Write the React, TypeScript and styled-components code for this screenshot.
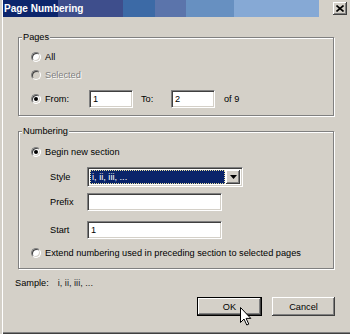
import styled, { createGlobalStyle } from 'styled-components';

const GlobalStyle = createGlobalStyle`
  html, body {
    margin: 0;
    padding: 0;
    background: #d4d0c8;
  }
  body {
    font-family: 'Liberation Sans', Arial, sans-serif;
    font-size: 9.2px;
    color: #000;
  }
`;

export default function App() {
  return (
    <>
      <GlobalStyle />
      <Window>
        <TitleBar>
          <Caption>Page Numbering</Caption>
          <CloseButton>
            <svg width='8' height='7' viewBox='0 0 8 7'>
              <path d='M0.5 0.5 L7.5 6.5 M7.5 0.5 L0.5 6.5' stroke='#000' strokeWidth='1.6' />
            </svg>
          </CloseButton>
        </TitleBar>

        <Body>
          <GroupBox $height={79}>
            <Legend>Pages</Legend>
            <RadioRow $mt={13}>
              <Radio />
              <span>All</span>
            </RadioRow>
            <RadioRow $mt={6} $disabled>
              <Radio $disabled />
              <span>Selected</span>
            </RadioRow>
            <RadioRow $mt={9} $height={18}>
              <Radio $checked />
              <FromLabel>From:</FromLabel>
              <Field $width={44}>1</Field>
              <ToLabel>To:</ToLabel>
              <Field $width={44}>2</Field>
              <OfLabel>of 9</OfLabel>
            </RadioRow>
          </GroupBox>

          <GroupBox $height={138} $mt={15}>
            <Legend>Numbering</Legend>
            <RadioRow $mt={14}>
              <Radio $checked />
              <span>Begin new section</span>
            </RadioRow>
            <FieldRow $mt={9}>
              <FieldLabel>Style</FieldLabel>
              <Select>
                <SelectValue>
                  <span>i, ii, iii, ...</span>
                </SelectValue>
                <DropButton>
                  <svg width='7' height='4' viewBox='0 0 7 4'>
                    <path d='M0 0 H7 L3.5 4 Z' fill='#000' />
                  </svg>
                </DropButton>
              </Select>
            </FieldRow>
            <FieldRow $mt={6}>
              <FieldLabel>Prefix</FieldLabel>
              <Field $width={135} />
            </FieldRow>
            <FieldRow $mt={10}>
              <FieldLabel>Start</FieldLabel>
              <Field $width={135}>1</Field>
            </FieldRow>
            <RadioRow $mt={8}>
              <Radio />
              <span>Extend numbering used in preceding section to selected pages</span>
            </RadioRow>
          </GroupBox>

          <SampleRow>
            <span>Sample:</span>
            <SampleValue>i, ii, iii, ...</SampleValue>
          </SampleRow>

          <ButtonRow>
            <Button $default>OK</Button>
            <Button>Cancel</Button>
          </ButtonRow>
        </Body>

        <Cursor width='12' height='19' viewBox='0 0 12 19'>
          <path d='M0.5 0.5 V15.5 L4 12 L6.8 18 L8.8 17.1 L6.1 11.4 H10.8 Z' fill='#fff' stroke='#000' strokeWidth='1' />
        </Cursor>
      </Window>
    </>
  );
}

const Window = styled.div`
  position: relative;
  width: 350px;
  height: 334px;
  box-sizing: border-box;
  background: #d4d0c8;
  box-shadow:
    inset 2px 0 0 #d4d0c8,
    inset 3px 0 0 #fff,
    inset 0 -1px 0 #404040,
    inset 0 -2px 0 #808080;
  display: flex;
  flex-direction: column;
  overflow: hidden;
`;

const TitleBar = styled.div`
  height: 17px;
  padding-left: 3px;
  display: flex;
  align-items: flex-start;
`;

const Caption = styled.div`
  width: 316px;
  height: 17px;
  box-sizing: border-box;
  padding-left: 1px;

  background: linear-gradient(
    to right,
    #0c256c 0 55px,
    #3e4e8c 55px 120px,
    #3c6aa6 120px 152px,
    #5b74ab 152px 183px,
    #6790c1 183px 231px,
    #86a9d5 231px 316px
  );
  color: #fff;
  font-size: 10px;
  font-weight: bold;
  line-height: 17px;
  white-space: nowrap;
`;

const CloseButton = styled.div`
  width: 14px;
  height: 13px;
  margin: 2px 3px 0 auto;
  box-sizing: border-box;

  background: #d4d0c8;
  box-shadow:
    inset -1px -1px 0 #404040,
    inset 1px 1px 0 #fff,
    inset -2px -2px 0 #808080;
  display: flex;
  justify-content: center;
  align-items: center;
`;

const Body = styled.div`
  padding: 20px 16px 0 18px;
  display: flex;
  flex-direction: column;
`;

const GroupBox = styled.div<{ $height: number; $mt?: number }>`
  height: ${(p) => p.$height}px;
  margin-top: ${(p) => p.$mt ?? 0}px;
  box-sizing: border-box;
  padding-left: 12px;

  border: 1px solid #808080;
  box-shadow:
    1px 1px 0 #fff,
    inset 1px 1px 0 #fff;
  display: flex;
  flex-direction: column;

  position: relative;
`;

const Legend = styled.span`
  position: absolute;
  top: -6px;
  left: 3px;
  padding: 0 1px;

  background: #d4d0c8;
  line-height: 11px;
`;

const RadioRow = styled.div<{ $mt?: number; $height?: number; $disabled?: boolean }>`
  height: ${(p) => p.$height ?? 12}px;
  margin-top: ${(p) => p.$mt ?? 0}px;

  display: flex;
  align-items: center;
  gap: 4px;
  color: ${(p) => (p.$disabled ? '#808080' : '#000')};
  text-shadow: ${(p) => (p.$disabled ? '1px 1px 0 #fff' : 'none')};
  white-space: nowrap;
`;

const Radio = styled.span<{ $checked?: boolean; $disabled?: boolean }>`
  width: 10px;
  height: 10px;
  flex-shrink: 0;
  box-sizing: border-box;

  border-radius: 50%;
  border: 1px solid;
  border-color: #808080 #fff #fff #808080;
  background: ${(p) => (p.$disabled ? '#d4d0c8' : '#fff')};
  box-shadow:
    inset 1px 1px 0 #404040,
    inset -1px -1px 0 #d4d0c8;

  position: relative;

  &::after {
    content: '';
    display: ${(p) => (p.$checked ? 'block' : 'none')};
    width: 4px;
    height: 4px;
    border-radius: 50%;
    background: #000;

    position: absolute;
    top: 2px;
    left: 2px;
  }
`;

const FromLabel = styled.span`
  width: 40px;
`;

const ToLabel = styled.span`
  width: 26px;
  margin-left: 4px;
`;

const OfLabel = styled.span`
  margin-left: 5px;
`;

const Field = styled.div<{ $width: number }>`
  width: ${(p) => p.$width}px;
  height: 18px;
  box-sizing: border-box;
  padding: 0 3px;

  background: #fff;
  border: 1px solid;
  border-color: #808080 #fff #fff #808080;
  box-shadow:
    inset 1px 1px 0 #404040,
    inset -1px -1px 0 #d4d0c8;
  line-height: 16px;
  white-space: nowrap;
`;

const FieldRow = styled.div<{ $mt?: number }>`
  margin-top: ${(p) => p.$mt ?? 0}px;
  padding-left: 19px;

  display: flex;
  align-items: center;
`;

const FieldLabel = styled.span`
  width: 37px;
`;

const Select = styled.div`
  width: 156px;
  height: 20px;
  box-sizing: border-box;
  padding: 2px;

  background: #fff;
  border: 1px solid;
  border-color: #808080 #fff #fff #808080;
  box-shadow:
    inset 1px 1px 0 #404040,
    inset -1px -1px 0 #d4d0c8;
  display: flex;
  gap: 1px;
`;

const SelectValue = styled.div`
  flex: 1;
  padding-left: 2px;

  background: #0a246a;
  color: #fff;
  outline: 1px dotted #e8e0a0;
  outline-offset: -1px;
  line-height: 14px;
  white-space: nowrap;
`;

const DropButton = styled.div`
  width: 14px;

  background: #d4d0c8;
  box-shadow:
    inset -1px -1px 0 #404040,
    inset 1px 1px 0 #fff,
    inset -2px -2px 0 #808080;
  display: flex;
  justify-content: center;
  align-items: center;
`;

const SampleRow = styled.div`
  height: 11px;
  margin: 9px 0 0 -3px;

  display: flex;
  align-items: center;
  line-height: 11px;
`;

const SampleValue = styled.span`
  margin-left: 9px;
  color: #222;
`;

const ButtonRow = styled.div`
  margin: 8px -1px 0 0;

  display: flex;
  justify-content: flex-end;
  gap: 10px;
`;

const Button = styled.div<{ $default?: boolean }>`
  width: ${(p) => (p.$default ? 65 : 63)}px;
  height: 19px;
  box-sizing: border-box;

  background: #d4d0c8;
  border: ${(p) => (p.$default ? '1px solid #000' : 'none')};
  box-shadow:
    inset -1px -1px 0 #404040,
    inset 1px 1px 0 #fff,
    inset -2px -2px 0 #808080;
  display: flex;
  justify-content: center;
  align-items: center;
`;

const Cursor = styled.svg`
  position: absolute;
  left: 240px;
  top: 307px;
`;
